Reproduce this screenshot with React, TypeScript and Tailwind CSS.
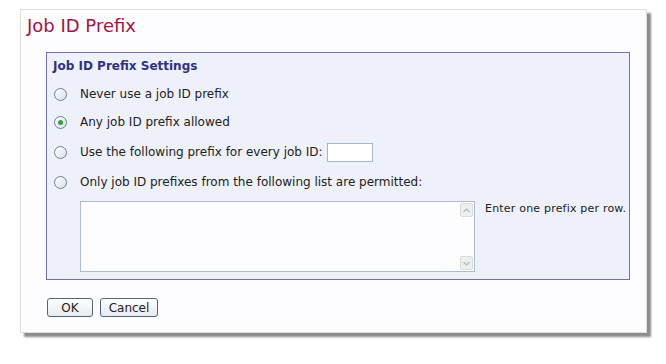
import React, { useState } from 'react';

type Mode = 'never' | 'any' | 'fixed' | 'list';

const Radio: React.FC<{ checked: boolean; onClick: () => void }> = ({ checked, onClick }) => (
    <button
        type="button"
        onClick={onClick}
        className="w-[13px] h-[13px] rounded-full border border-[#6c7f99] bg-gradient-to-br from-white to-[#d9e0e9] flex items-center justify-center shrink-0"
    >
        {checked && <span className="w-[5px] h-[5px] rounded-full bg-[#2fa33e]" />}
    </button>
);

const ScrollArrow: React.FC<{ up?: boolean }> = ({ up }) => (
    <div className="w-[13px] h-[14px] bg-[#eef0ee] border border-[#d9dcd6] rounded-[2px] flex items-center justify-center">
        <svg width="7" height="5" viewBox="0 0 7 5">
            <path d={up ? 'M0.5 4L3.5 1L6.5 4' : 'M0.5 1L3.5 4L6.5 1'} fill="none" stroke="#b8bcc0" strokeWidth="1.3" />
        </svg>
    </div>
);

export default function App() {
    const [mode, setMode] = useState<Mode>('any');
    const [prefix, setPrefix] = useState('');

    const rows: { key: Mode; label: string; h: string }[] = [
        { key: 'never', label: 'Never use a job ID prefix', h: 'h-[28px]' },
        { key: 'any', label: 'Any job ID prefix allowed', h: 'h-[28px]' },
        { key: 'fixed', label: 'Use the following prefix for every job ID:', h: 'h-[32px]' },
        { key: 'list', label: 'Only job ID prefixes from the following list are permitted:', h: 'h-[28px]' },
    ];

    return (
        <div className="w-[666px] h-[364px] bg-white pt-[9px] pl-[20px] font-['DejaVu_Sans',sans-serif]">
            <div className="w-[627px] h-[324px] bg-[#fdfcff] border border-[#dedede] shadow-[4px_4px_2px_#8c8c8c]">
                <h1 className="pl-[6px] pt-[5px] h-[42px] text-[18px] leading-[21px] text-[#a6123f]">Job ID Prefix</h1>

                <div className="ml-[25px] w-[584px] h-[228px] border border-[#7070aa] bg-[#eef1f9] pl-[6px] pt-[6px]">
                    <div className="h-[21px] text-[12px] font-bold text-[#2f3283] leading-[15px]">Job ID Prefix Settings</div>

                    {rows.map((r) => (
                        <div key={r.key} className={`${r.h} flex items-center pl-[1px] text-[12px] text-[#222]`}>
                            <Radio checked={mode === r.key} onClick={() => setMode(r.key)} />
                            <span className="ml-[13px]">{r.label}</span>
                            {r.key === 'fixed' && (
                                <input
                                    value={prefix}
                                    onChange={(e) => setPrefix(e.target.value)}
                                    className="ml-[4px] w-[46px] h-[19px] border border-[#a5b7cc] bg-white outline-none text-[12px] px-1"
                                />
                            )}
                        </div>
                    ))}

                    <div className="flex mt-[5px] ml-[27px]">
                        <div className="w-[395px] h-[71px] border border-[#aabdcf] bg-[#fdfcff] flex justify-end">
                            <div className="w-[14px] flex flex-col justify-between py-[1px] pr-[1px]">
                                <ScrollArrow up />
                                <ScrollArrow />
                            </div>
                        </div>
                        <div className="ml-[10px] pt-[1px] text-[11px] tracking-[0.2px] text-[#222] leading-[13px]">Enter one prefix per row.</div>
                    </div>
                </div>

                <div className="flex gap-[7px] ml-[26px] mt-[18px]">
                    <button className="w-[46px] h-[19px] rounded-[3px] border border-[#4a6585] bg-gradient-to-b from-white to-[#e6eaef] text-[12px] text-[#222] leading-none">OK</button>
                    <button className="w-[58px] h-[19px] rounded-[3px] border border-[#4a6585] bg-gradient-to-b from-white to-[#e6eaef] text-[12px] text-[#222] leading-none">Cancel</button>
                </div>
            </div>
        </div>
    );
}
